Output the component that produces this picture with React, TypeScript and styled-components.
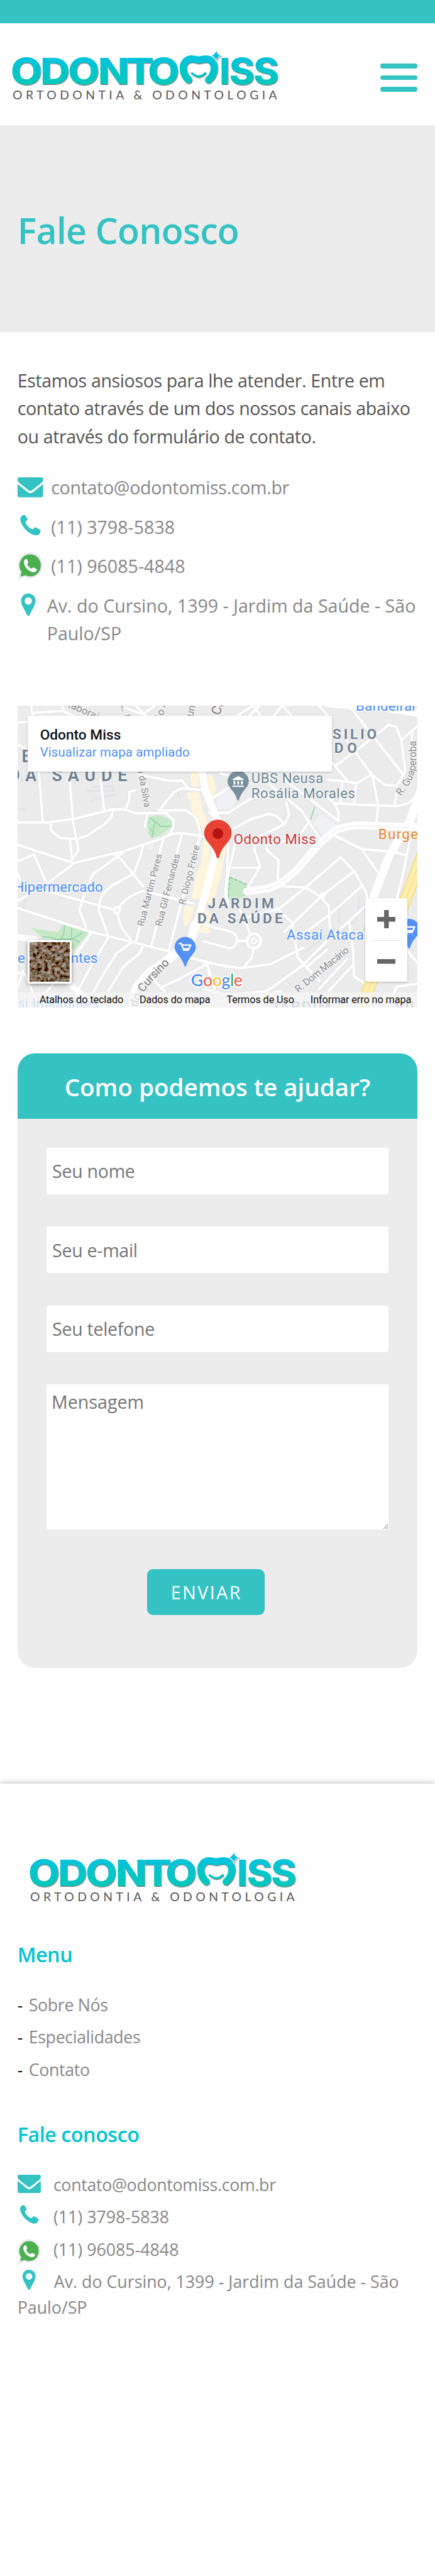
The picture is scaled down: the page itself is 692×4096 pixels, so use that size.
import React from 'react';
import styled, { createGlobalStyle, css } from 'styled-components';

/* Design units are those of a 750-wide artboard shown in a 692px window. */
const u = (n: number) => `${+((n * 692) / 750).toFixed(3)}px`;

const teal = '#35c2c3';
const cyan = '#00c5cd';
const mist = '#ececec';
const grey = '#888';

const GlobalStyle = createGlobalStyle`
  *, *::before, *::after { box-sizing: border-box; }
  html, body { margin: 0; padding: 0; background: #fefefe; }
  body { font-family: 'Open Sans', 'Noto Sans', sans-serif; color: #222; }
  h1, h2, h3, p, ul { margin: 0; padding: 0; font-weight: inherit; }
`;

const Page = styled.div`
  display: flex;
  flex-direction: column;
  width: ${u(750)};
  height: 4096px;
  overflow: hidden;
`;

const TopBar = styled.div`
  flex: none;
  height: ${u(40)};
  background: ${teal};
`;

const Header = styled.header`
  display: flex;
  flex: none;
  justify-content: space-between;
  align-items: flex-start;
  height: ${u(176)};
  padding: ${u(40)} ${u(30)} 0 ${u(15)};
  background: #fff;
`;

const LogoSvg = styled.svg`
  display: block;
  width: ${u(470)};
  height: ${u(100)};
`;

const MenuButton = styled.button`
  display: flex;
  flex-direction: column;
  gap: ${u(12)};
  width: ${u(64)};
  margin-top: ${u(30)};
  padding: 0;
  border: 0;
  background: none;
`;

const MenuBar = styled.span`
  height: ${u(8)};
  border-radius: ${u(4)};
  background: ${teal};
`;

const Hero = styled.section`
  display: flex;
  flex: none;
  align-items: center;
  height: ${u(356)};
  padding: ${u(5)} ${u(30)} 0;
  background: ${mist};
`;

const HeroTitle = styled.h1`
  font-size: ${u(62)};
  font-weight: 600;
  letter-spacing: ${u(-0.77)};
  color: ${teal};
`;

const Main = styled.main`
  flex: none;
  padding: ${u(60)} ${u(30)} ${u(200)};
`;

const Intro = styled.p`
  font-size: ${u(31)};
  line-height: ${u(48)};
  letter-spacing: ${u(-0.42)};
  white-space: nowrap;
  color: #555;
`;

const ContactList = styled.ul<{ $gap: number; $top: number }>`
  display: flex;
  flex-direction: column;
  gap: ${p => u(p.$gap)};
  margin-top: ${p => u(p.$top)};
  list-style: none;
`;

const ContactRow = styled.li<{ $small?: boolean; $inset: number; $tight?: boolean }>`
  display: grid;
  grid-template-columns: ${p => u(p.$inset)} 1fr;
  color: ${grey};
  white-space: nowrap;
  font-size: ${p => u(p.$small ? 29 : 31)};
  line-height: ${p => u(p.$small ? 56 : 48)};
  letter-spacing: ${p => u(p.$tight ? -0.35 : 0)};
`;

const IconSvg = styled.svg<{ $small?: boolean }>`
  display: block;
  overflow: visible;
  width: ${p => u(p.$small ? 40 : 44)};
  height: ${p => u(p.$small ? 56 : 48)};
`;

const FooterAddress = styled.p`
  margin-top: ${u(6)};
  color: ${grey};
  white-space: nowrap;
  font-size: ${u(29)};
  line-height: ${u(44)};
`;

const InlinePin = styled.svg`
  width: ${u(63)};
  height: ${u(35)};
  vertical-align: ${u(-3.5)};
`;

/* ---------- map ---------- */

const MapFrame = styled.div`
  position: relative;
  width: ${u(690)};
  height: ${u(520)};
  margin-top: ${u(100)};
  overflow: hidden;
  font-family: Roboto, 'Open Sans', sans-serif;
`;

const MapSvg = styled.svg`
  display: block;
  width: 100%;
  height: 100%;
`;

const PlaceCard = styled.div`
  position: absolute;
  left: ${u(18)};
  top: ${u(18)};
  width: ${u(524)};
  height: ${u(95.5)};
  padding: ${u(18)} ${u(21)};
  border-radius: ${u(2)};
  background: #fff;
  box-shadow: 0 1px 3px rgba(0, 0, 0, 0.22);
`;

const PlaceName = styled.div`
  font-size: ${u(24.6)};
  font-weight: 500;
  line-height: ${u(30)};
  color: #111;
`;

const PlaceLink = styled.a`
  display: block;
  font-size: ${u(22)};
  line-height: ${u(30)};
  letter-spacing: ${u(0.2)};
  color: #5590f5;
`;

const ZoomControl = styled.div`
  position: absolute;
  left: ${u(600)};
  top: ${u(332)};
  display: flex;
  flex-direction: column;
  align-items: center;
  width: ${u(72)};
  height: ${u(144)};
  border-radius: ${u(3)};
  background: #fff;
  box-shadow: 0 1px 3px rgba(0, 0, 0, 0.25);
`;

const ZoomKey = styled.div`
  display: flex;
  align-items: center;
  justify-content: center;
  width: ${u(54)};
  height: 50%;
  & + & { border-top: 1px solid #e2e2e2; }
`;

const ZoomGlyph = styled.svg`
  width: ${u(32)};
  height: ${u(32)};
  fill: #666;
`;

const Satellite = styled.div`
  position: absolute;
  left: ${u(18)};
  top: ${u(404.5)};
  width: ${u(76)};
  height: ${u(75)};
  border: ${u(3.5)} solid #fff;
  border-radius: ${u(3)};
  overflow: hidden;
  box-shadow: 0 2px 6px rgba(0, 0, 0, 0.4);
`;

const Attribution = styled.div`
  position: absolute;
  left: 0;
  right: 0;
  bottom: 0;
  display: flex;
  justify-content: space-between;
  height: ${u(26)};
  padding: 0 ${u(11)} 0 ${u(38)};
  background: rgba(245, 245, 245, 0.78);
  font-size: ${u(17.6)};
  line-height: ${u(27)};
  letter-spacing: ${u(-0.1)};
  color: #111;
  white-space: nowrap;
`;

/* ---------- form ---------- */

const Card = styled.section`
  margin-top: ${u(80)};
  border-radius: ${u(30)};
  overflow: hidden;
  background: ${mist};
`;

const CardTitle = styled.h2`
  display: flex;
  align-items: center;
  justify-content: center;
  height: ${u(112)};
  padding-top: ${u(3)};
  background: ${teal};
  color: #fff;
  font-size: ${u(41.8)};
  font-weight: 600;
  white-space: nowrap;
`;

const Form = styled.form`
  display: flex;
  flex-direction: column;
  gap: ${u(56)};
  padding: ${u(50)} ${u(50)} ${u(90)};
`;

const fieldStyle = css`
  display: block;
  width: 100%;
  border: 0;
  border-radius: ${u(4)};
  outline: 0;
  background: #fff;
  font-family: inherit;
  font-size: ${u(31)};
  letter-spacing: ${u(-0.33)};
  color: #333;
  &::placeholder { color: #757575; opacity: 1; }
`;

const Field = styled.input`
  ${fieldStyle}
  height: ${u(80)};
  padding: 0 ${u(10)};
`;

const MessageField = styled.textarea`
  ${fieldStyle}
  height: ${u(250)};
  padding: ${u(8.4)} ${u(9)};
  line-height: ${u(44)};
  letter-spacing: 0;
  resize: both;
`;

const SubmitButton = styled.button`
  width: ${u(202)};
  height: ${u(80)};
  margin: ${u(12)} 0 0 ${u(174)};
  padding: 0 0 0 ${u(2)};
  border: 0;
  border-radius: ${u(10)};
  background: ${teal};
  color: #fff;
  font-family: inherit;
  font-size: ${u(31)};
  letter-spacing: ${u(2.7)};
`;

/* ---------- footer ---------- */

const Footer = styled.footer`
  flex: none;
  height: ${u(1400)};
  padding: ${u(112)} ${u(30)} 0;
  box-shadow: 0 0 ${u(10)} rgba(0, 0, 0, 0.3);
`;

const FooterLogo = styled.div`
  margin-left: ${u(15)};
`;

const FooterTitle = styled.h3<{ $top: number }>`
  margin-top: ${p => u(p.$top)};
  font-size: ${u(35)};
  font-weight: 600;
  line-height: ${u(48)};
  letter-spacing: ${u(-0.5)};
  color: ${cyan};
`;

const FooterMenu = styled.ul`
  margin-top: ${u(35)};
  list-style: none;
`;

const FooterLink = styled.li`
  display: flex;
  font-size: ${u(29)};
  line-height: ${u(56)};
  letter-spacing: ${u(-0.35)};
  color: ${grey};
  &::before {
    content: '-';
    width: ${u(19.5)};
    color: #111;
  }
`;

/* ---------- drawings ---------- */

function Logo({ id }: { id: string }) {
  return (
    <LogoSvg viewBox="15 80 470 100" role="img" aria-label="Odonto Miss">
      <defs>
        <linearGradient id={id} gradientUnits="userSpaceOnUse" x1="0" y1="98" x2="0" y2="146">
          <stop offset="0" stopColor="#02c3dc" />
          <stop offset="1" stopColor="#04c8b9" />
        </linearGradient>
        <filter id={`${id}-shade`} x="-5%" y="-10%" width="110%" height="125%">
          <feDropShadow dx="0.8" dy="1.2" stdDeviation="0.6" floodColor="#5b3d40" floodOpacity="0.75" />
        </filter>
      </defs>
      <g fill={`url(#${id})`} filter={`url(#${id}-shade)`} fontFamily="Inter, sans-serif" fontWeight="800" fontSize="63">
        <text transform="scale(1.12 1)" x="16.2 62.1 104.600 150.700 194.200 227.400" y="145.3">ODONTO</text>
        <text x="378.3" y="145.3">I</text>
        <text transform="scale(1.06 1)" x="372.800 412.200" y="145.3">SS</text>
        <g fill="none" stroke={`url(#${id})`} strokeLinecap="round">
          <path strokeWidth="12.500" d="M325 137.500C314 128 314 113 319 107C325 98.500 334 101.500 342.300 103.500C350.500 101.500 360 98.500 366 107C371 113 371 128 359.500 137.500" />
          <path strokeWidth="3.600" d="M331 126Q342 137 353.500 126" />
        </g>
        <path stroke="#fff" strokeWidth="1.200" d="M372.600 86Q374.500 93.500 381.500 95.500Q374.500 98 372.600 105.500Q370.500 98 363.500 95.500Q370.500 93.500 372.600 86Z" />
      </g>
      <text x="21.500" y="171.500" textLength="456" lengthAdjust="spacing" fontFamily="Lato, sans-serif" fontWeight="400" fontSize="21" fill="#5c5657">
        ORTODONTIA &amp; ODONTOLOGIA
      </text>
    </LogoSvg>
  );
}

type IconProps = { small?: boolean };

const box = (small?: boolean) => (small ? '0 0 44 61.6' : '0 0 44 48');

const MailIcon = ({ small }: IconProps) => (
  <IconSvg $small={small} viewBox={box(small)} fill={teal}>
    <g transform={small ? 'translate(0 5.500)' : undefined}>
      <path d="M3 6.500h38a3 3 0 0 1 3 3v1.500c0 2-1.500 4-3.500 5.600L25.500 28.500c-2.500 2-4.500 2-7 0L3.500 16.600C1.500 15 0 13 0 11V9.500a3 3 0 0 1 3-3z" />
      <path d="M0 18.200c5 4 10.500 8.500 16.500 13.300 4 3 7 3 11 0C33.500 26.700 39 22.200 44 18.200V38a3 3 0 0 1-3 3H3a3 3 0 0 1-3-3z" />
    </g>
  </IconSvg>
);

const PhoneIcon = ({ small }: IconProps) => (
  <IconSvg $small={small} viewBox={box(small)} fill={teal}>
    <path
      transform={small ? 'translate(0 5.600)' : undefined}
      d="M7.500 4.500C9.500 3 12 2.600 13.200 3.600L17 9.800C17.600 11 16.600 12.300 15.200 13.200C13.400 14.500 13.600 16 14.500 17.800C16.600 21.800 20 25.300 24 27.300C26 28.200 27.300 27.500 28.300 25.900C29.200 24.500 30.400 24 31.700 24.600L38.600 28.500C40.200 29.800 39.600 32.500 38.200 35C36.600 37.700 32.500 38.700 29 37.800C18 35 5.500 21.500 4.600 10.500C4.500 8 5.500 6 7.500 4.500Z"
    />
  </IconSvg>
);

const WhatsIcon = ({ small }: IconProps) => (
  <IconSvg $small={small} viewBox={box(small)}>
    <g transform={small ? 'translate(0 11)' : undefined}>
      <path fill="#e9edf0" d="M22 0a22 22.500 0 1 1-9.800 43L0 48 3.400 34.500A22 22.500 0 0 1 22 0Z" />
      <path fill="#4caf50" d="M22 3.800a18.400 19 0 1 1-8.500 36L5 42l1.800-8A18.400 19 0 0 1 22 3.800Z" />
      <path
        fill="#fff"
        d="M13 12.500C14.200 11.500 15.600 11.600 16.300 12.500L18.300 17C18.600 18.200 17.200 19.400 16.600 20.200C16.800 23 20.500 27 24.200 28.500C25.500 27.800 26.200 26.300 27.300 26.200L32.500 28.700C33.500 29.500 32.900 31.500 31.800 32.900C30.300 34.500 27.500 34.800 25 34.200C18 32.200 12 25.500 10.900 18.500C10.700 16 11.500 13.800 13 12.500Z"
      />
    </g>
  </IconSvg>
);

const pinPath = 'M12.500 0C19.500 0 25 5.500 25 12.500C25 20 18.500 28 14.600 37.200Q12.500 40 10.400 37.200C6.500 28 0 20 0 12.500C0 5.500 5.500 0 12.500 0ZM12.500 6.500a6.300 6.300 0 1 0 0 12.600a6.300 6.300 0 1 0 0-12.600Z';

const PinIcon = () => (
  <IconSvg viewBox="0 0 44 48">
    <path fill={teal} fillRule="evenodd" transform="translate(6 3)" d={pinPath} />
  </IconSvg>
);

type MarkerProps = { x: number; y: number; fill: string; children?: React.ReactNode };
const Marker = ({ x, y, fill, children }: MarkerProps) => (
  <g transform={`translate(${x} ${y})`}>
    <path fill={fill} d="M0-18.500a18.300 18.300 0 0 1 18.300 18.300C18.300 10 6 15 1.500 31.500Q0 34 -1.500 31.500C-6 15-18.300 10-18.300-.2A18.300 18.300 0 0 1 0-18.500Z" />
    {children}
  </g>
);

const Cart = () => (
  <path fill="none" stroke="#fff" strokeWidth="2.600" strokeLinejoin="round" d="M-11-7h4l4.500 11.500h9M-6-4.500h15.500l-3 6.500h-9.500M-2 8.300v.5M6 8.300v.5" />
);

const minorWest = [
  'M90 637H240L380 620L500 592L580 573L650 575L700 593L865 592',
  'M200 390L220 637', 'M360 440L378 640L405 770L365 822', 'M520 430L538 580',
  'M262 640V675L310 712L400 716L450 700L540 645L575 612L585 575', 'M360 716L370 800',
  'M90 745L380 832L640 775L850 710L880 692L940 688L1060 705',
  'M90 825L175 790L235 920', 'M90 1015L245 930L380 835', 'M90 880L110 930',
  'M645 575L668 530V490L700 480', 'M715 405L870 435H940L970 470', 'M820 580L900 490L940 472L1040 480',
  'M865 600L897 625V655L875 700', 'M830 578H960L1010 610L1035 680V705', 'M762 590L748 660',
  'M740 745L725 800L690 885L580 940C530 975 510 1010 510 1060L560 1185',
  'M640 780L480 885L435 985L410 1060L445 1145', 'M590 790L625 815L740 945',
  'M90 1050L470 1165L690 1215L870 1258', 'M225 965L600 1060', 'M610 1060C630 1010 680 985 740 968L1000 1028',
  'M605 1075L625 1140L680 1210', 'M845 710L800 870L700 1215', 'M940 695L850 990L780 1240',
  'M1035 700L930 1050L870 1260', 'M560 1190L470 1330L400 1450', 'M470 1170L380 1290L210 1490',
  'M740 1230L720 1270L640 1330L560 1450L540 1528', 'M680 1215L600 1270L520 1390L440 1528',
  'M985 1290L1180 1335', 'M780 1385L850 1450M830 1435L940 1385L1070 1320L1110 1440',
  'M160 73L170 130M165 108L330 98M320 73L325 100L420 140', 'M90 155L150 150M90 260L150 290',
  'M650 85L740 115L800 73M700 73L760 125', 'M1075 530L1200 460', 'M120 1350L90 1430M90 1360L130 1370L200 1528',
  'M1080 590H1180', 'M1180 740L1165 1030',
];

const minorEast = [
  'M75 590H130L240 525L345 500', 'M150 670L250 620L340 595L380 605L420 645L270 715L265 770L295 850L230 950',
  'M430 540L445 600L420 645', 'M165 740L135 860L115 960L130 1040M150 855H290', 'M340 450L510 580L600 710',
  'M550 630L490 710L325 748L330 770L390 820L385 930', 'M420 430L700 630V590L680 545L600 480',
  'M680 545L900 555L1000 558L1060 545L1110 500', 'M895 650L905 550L875 410L780 290L740 240',
  'M690 360L820 270L960 165L1000 175L1025 240L1045 390L1000 460L940 455L870 405L790 450L750 440L660 340',
  'M1110 170L1025 240M1080 200V260M760 80L1035 405', 'M600 73L650 130M780 95L740 73',
  'M640 430L790 445M720 440L710 540M790 450L780 545M1000 500L990 550',
  'M680 700L820 765L1000 780M820 765L920 900', 'M710 805L780 870L840 970L860 1040',
  'M405 945L530 950L600 990L650 1040L655 1150', 'M710 805L530 950L390 1055L200 1100',
  'M775 875L615 990L480 1110L420 1165', 'M825 940L650 1085L480 1200', 'M380 1050L460 1120L490 1290L600 1400',
  'M180 1208H230M0 1130L150 1165C190 1190 180 1230 140 1245L0 1210', 'M190 1060L245 1175M265 1240L250 1290L210 1335',
  'M0 1310L190 1340L350 1320L520 1240', 'M20 1320L40 1400', 'M0 1440L130 1470L330 1450L510 1330L650 1200L840 1040',
  'M755 1120L775 1250L780 1380L830 1410', 'M770 1330L640 1460M745 1295L600 1440M540 1330L640 1250',
  'M1070 720L1030 900L1000 1010M990 780L1050 795', 'M1060 1260L1130 1340M1000 1430L1110 1415M960 1528L1000 1430',
  'M160 130L260 73L300 125M360 125L410 73L460 125M240 120L290 73', 'M90 400L130 410M30 530L120 480',
  'M330 1460L420 1528M210 1500L400 1450',
];

const lanes = ['M700 1120L705 1050L690 1020', 'M800 980L810 1020L790 1110L700 1180', 'M510 1275L680 1150', 'M550 1300L640 1240', 'M410 1370L450 1420'];
const lanesWest = ['M450 485H590', 'M470 530L600 500', 'M470 465L580 462L590 490', 'M90 575H130', 'M90 440L120 430', 'M910 480L930 515', 'M130 1000L120 1050'];

function MapDrawing() {
  return (
    <MapSvg viewBox="0 0 690 520" preserveAspectRatio="none">
      <defs>
        <path id="guaperoba" d="M661 156C672 142 684 125 687 103V64" />
        <path id="cursino" d="M206 520C212 492 236 472 262 444" />
      </defs>
      <rect width="690" height="520" fill="#ebebec" />
      <g transform="scale(0.33333 0.35714) translate(-90 -73)" strokeLinejoin="round" strokeLinecap="round">
        <g fill="#fdf5dc">
          <path d="M985 395L1030 395L1028 465L985 460ZM1072 405L1100 415L1118 480L1095 515L1120 570L1090 570L1075 500ZM970 490L1030 490L1045 570L1075 640L1060 700L1040 660L990 580L985 525L965 520ZM1110 600L1145 610V690L1170 740L1150 860L1100 1030L1065 1020L1120 820ZM1050 720L1090 740L1080 850L1040 1010L990 1005L1010 900L1040 830ZM950 1040L1005 1040L990 1100L965 1140L948 1130ZM1045 1050L1085 1070L1080 1175L1020 1165Z" />
        </g>
        <g fill="#eff1f5">
          <path d="M1120 510L1190 480L1230 510L1200 570L1120 575ZM1620 640L1660 600L1740 650L1670 700Z" />
          <circle cx="775" cy="752" r="18" />
        </g>
        <g fill="#c5e9c6">
          <path d="M765 612L815 600L885 625L888 655L830 700L785 712L765 690L770 660L755 655ZM160 1145L250 1160L300 1165L325 1130L460 1168L380 1255L360 1210L220 1195ZM1187 900L1272 935L1260 1000L1180 1010Z" />
          <path d="M1875 1160L1895 1120V1160Z" />
        </g>
        <path d="M785 710L800 630L775 615M800 630L830 655H880M770 660L795 690M220 1190C260 1180 290 1210 310 1200C330 1190 330 1160 335 1135M310 1200H370L425 1170M370 1145L368 1195L410 1215M1625 565L1605 625" fill="none" stroke="#8fd3a4" strokeWidth="5" />
        <path d="M1187 900L1272 935L1262 1000M1187 900L1178 1030" fill="none" stroke="#7cc992" strokeWidth="5" strokeDasharray="16 10" />

        <g fill="none" stroke="#e0e2e6" strokeWidth="16">
          {minorWest.map(d => <path key={d} d={d} />)}
          <g transform="translate(1050 0)">{minorEast.map(d => <path key={d} d={d} />)}</g>
        </g>
        <g fill="none" stroke="#e0e2e7" strokeWidth="7">
          {lanesWest.map(d => <path key={d} d={d} />)}
          <g transform="translate(1050 0)">{lanes.map(d => <path key={d} d={d} />)}</g>
        </g>
        <g fill="none" stroke="#fff" strokeWidth="12">
          {minorWest.map(d => <path key={d} d={d} />)}
          <g transform="translate(1050 0)">{minorEast.map(d => <path key={d} d={d} />)}</g>
        </g>
        <circle cx="604" cy="1060" r="21" fill="#fff" />
        <circle cx="604" cy="1060" r="8" fill="#eee" />
        <circle cx="1312" cy="1208" r="35" fill="#ebebec" stroke="#fff" strokeWidth="13" />
        <circle cx="1312" cy="1208" r="13" fill="#ebebec" stroke="#fff" strokeWidth="7" />
        <circle cx="1668" cy="990" r="15" fill="#fff" />

        <g fill="none" stroke="#fff">
          <path strokeWidth="37" d="M1045 380L1060 480L1120 620L1130 700L1105 820L1055 1000L1010 1150" />
          <path strokeWidth="46" d="M1010 1130L985 1210L870 1295" />
          <path strokeWidth="34" d="M900 1275L770 1355L700 1430L655 1540" />
          <path strokeWidth="30" d="M80 1190L180 1200L260 1330L400 1450L500 1540" />
          <path strokeWidth="37" d="M1275 970L1390 955L1450 930L1530 870L1650 740L1740 670L1830 650L2170 660" />
          <path strokeWidth="42" d="M2180 470L2115 640L2010 800L1930 1000" />
          <path strokeWidth="40" d="M1690 60L1800 70L1950 75L2180 110" />
        </g>
        <path d="M1275 972L1390 955L1450 930L1530 870L1650 740L1740 670L1830 652L2120 662" fill="none" stroke="#e2e4e8" strokeWidth="3" strokeDasharray="40 8" />
        <g fill="none" strokeLinecap="butt">
          <path stroke="#f6dc84" strokeWidth="62" d="M2190 780L2060 1100M1935 1370L1870 1528" />
          <path stroke="#fdeeae" strokeWidth="50" d="M2190 780L2060 1100M1935 1370L1870 1528" />
          <path stroke="#f6dc84" strokeWidth="4" d="M2190 780L2060 1100M1935 1370L1870 1528" />
        </g>
      </g>

      <g fill="#8b8e91" fontSize="16" stroke="#f3f3f3" strokeWidth="3" strokeLinejoin="round" paintOrder="stroke">
        <text transform="translate(217 381) rotate(-75.500)" textLength="128">Rua Martim Peres</text>
        <text transform="translate(248 381) rotate(-75.500)" textLength="128">Rua Gil Fernandes</text>
        <text transform="translate(288.500 344) rotate(-76)" textLength="105">R. Diogo Freire</text>
        <text transform="translate(207 109) rotate(80)" textLength="68">a da Silva</text>
        <text transform="translate(81 0) rotate(24)" fontSize="18">Itaboraí</text>
        <text transform="translate(178 -4) rotate(82)" fontSize="19">L. M</text>
        <text transform="translate(250 22) rotate(-76)" fontSize="18">io A</text>
        <text transform="translate(302 20) rotate(-76)" fontSize="18">ung</text>
        <text transform="translate(348 18) rotate(-70)" fontSize="23" fill="#77797c">Cu</text>
        <text transform="translate(484 495) rotate(-39)" textLength="114" fontSize="17">R. Dom Macário</text>
        <text fontSize="17"><textPath href="#guaperoba">R. Guaperoba</textPath></text>
        <text fontSize="20" fill="#77797c"><textPath href="#cursino">do Cursino</textPath></text>
      </g>

      <g fill="#6f7f8e" fontWeight="600" stroke="#f1f1f1" strokeWidth="3" strokeLinejoin="round" paintOrder="stroke">
        <text x="7" y="98" fontSize="29">E</text>
        <text x="-15" y="130.500" fontSize="29" textLength="204">DA SAÚDE</text>
        <text x="543" y="57" fontSize="24.500" textLength="76">SILIO</text>
        <text x="546" y="81.500" fontSize="24.500" textLength="39">DO</text>
        <text x="328" y="349.500" fontSize="24.500" textLength="114">JARDIM</text>
        <text x="310" y="374.500" fontSize="24.500" textLength="147">DA SAÚDE</text>
        <text x="436" y="527" fontSize="24.500" textLength="104">JARDIM</text>
        <text x="650" y="527" fontSize="24.500" textLength="40">VIL</text>
      </g>

      <g fontSize="24" stroke="#f6f6f6" strokeWidth="3" strokeLinejoin="round" paintOrder="stroke">
        <g fill="#4f8ff5">
          <text x="-6" y="321" textLength="153">Hipermercado</text>
          <text x="0" y="443.500">e</text>
          <text x="92" y="443.500" textLength="46">ntes</text>
          <text x="0" y="521" textLength="140">si Imigrantes</text>
          <text x="583" y="8.500" textLength="105">Bandeirar</text>
          <text x="464" y="403.500" textLength="147">Assaí Atacad</text>
        </g>
        <g fill="#6f8794">
          <text x="403" y="133.500" textLength="124">UBS Neusa</text>
          <text x="403" y="159" textLength="179">Rosália Morales</text>
        </g>
        <text x="372.500" y="238.500" textLength="142" fill="#c9383b">Odonto Miss</text>
        <text x="622" y="229.500" fill="#e38b29" textLength="78">Burger</text>
      </g>

      <Marker x={380.300} y={131} fill="#78909c">
        <path fill="#fff" d="M-9.500-4.500L0-9.500L9.500-4.500V-2.500H-9.500ZM-8-1h3v6h-3zM-1.500-1h3v6h-3zM5-1h3v6h-3zM-10 7h20v2.200h-20z" />
      </Marker>
      <Marker x={289} y={417} fill="#5491f5"><Cart /></Marker>
      <Marker x={675} y={386} fill="#5491f5"><Cart /></Marker>
      <g transform="translate(345.300 220.500)">
        <path fill="#ea4335" stroke="#d23a2e" d="M0-23.500A23.200 23.200 0 0 1 23.200-.3C23.200 14 6 20 1.500 41Q0 44-1.500 41C-6 20-23.200 14-23.200-.3A23.200 23.200 0 0 1 0-23.500Z" />
        <circle r="9.200" fill="#b31412" />
      </g>

      <text x="299" y="483" fontSize="29" fontWeight="500" textLength="89" fontFamily="Lato, sans-serif" stroke="#fff" strokeWidth="4" paintOrder="stroke" strokeLinejoin="round">
        <tspan fill="#4a8af4">G</tspan><tspan fill="#ee5f52">o</tspan><tspan fill="#f8c12c">o</tspan><tspan fill="#4a8af4">g</tspan><tspan fill="#45b065">l</tspan><tspan fill="#ee5f52">e</tspan>
      </text>
    </MapSvg>
  );
}

function MapPanel() {
  return (
    <MapFrame>
      <MapDrawing />
      <PlaceCard>
        <PlaceName>Odonto Miss</PlaceName>
        <PlaceLink>Visualizar mapa ampliado</PlaceLink>
      </PlaceCard>
      <ZoomControl>
        <ZoomKey><ZoomGlyph viewBox="0 0 32 32"><path d="M12 0h8v12h12v8H20v12h-8V20H0v-8h12z" /></ZoomGlyph></ZoomKey>
        <ZoomKey><ZoomGlyph viewBox="0 0 32 32"><path d="M0 12h32v8H0z" /></ZoomGlyph></ZoomKey>
      </ZoomControl>
      <Attribution>
        <span>Atalhos do teclado</span><span>Dados do mapa</span><span>Termos de Uso</span><span>Informar erro no mapa</span>
      </Attribution>
      <Satellite>
        <MapSvg viewBox="0 0 68 68">
          <filter id="rooftops" x="0" y="0" width="100%" height="100%">
            <feTurbulence type="fractalNoise" baseFrequency="0.16" numOctaves="3" seed="8" />
            <feColorMatrix values="0.8 0.2 0 0 -0.270  0.8 0.1 0 0 -0.290  0.8 0.1 0 0 -0.340  0 0 0 0 1" />
          </filter>
          <rect width="68" height="68" fill="#85705f" filter="url(#rooftops)" />
          <path d="M0 50Q25 50 34 60T68 60M30 26Q46 12 58 26T48 52" fill="none" stroke="#56604a" strokeWidth="2.500" opacity=".6" />
        </MapSvg>
      </Satellite>
    </MapFrame>
  );
}

export default function App() {
  return (
    <Page>
      <GlobalStyle />
      <TopBar />
      <Header>
        <Logo id="logo-top" />
        <MenuButton aria-label="Menu"><MenuBar /><MenuBar /><MenuBar /></MenuButton>
      </Header>
      <Hero><HeroTitle>Fale Conosco</HeroTitle></Hero>
      <Main>
        <Intro>
          Estamos ansiosos para lhe atender. Entre em<br />
          contato através de um dos nossos canais abaixo<br />
          ou através do formulário de contato.
        </Intro>
        <ContactList $gap={20} $top={40}>
          <ContactRow $inset={58} $tight><MailIcon /><span>contato@odontomiss.com.br</span></ContactRow>
          <ContactRow $inset={58}><PhoneIcon /><span>(11) 3798-5838</span></ContactRow>
          <ContactRow $inset={58}><WhatsIcon /><span>(11) 96085-4848</span></ContactRow>
          <ContactRow $inset={51}><PinIcon /><span>Av. do Cursino, 1399 - Jardim da Saúde - São<br />Paulo/SP</span></ContactRow>
        </ContactList>
        <MapPanel />
        <Card>
          <CardTitle>Como podemos te ajudar?</CardTitle>
          <Form>
            <Field placeholder="Seu nome" />
            <Field placeholder="Seu e-mail" />
            <Field placeholder="Seu telefone" />
            <MessageField placeholder="Mensagem" />
            <SubmitButton type="button">ENVIAR</SubmitButton>
          </Form>
        </Card>
      </Main>
      <Footer>
        <FooterLogo><Logo id="logo-foot" /></FooterLogo>
        <FooterTitle $top={58}>Menu</FooterTitle>
        <FooterMenu>
          <FooterLink>Sobre Nós</FooterLink>
          <FooterLink>Especialidades</FooterLink>
          <FooterLink>Contato</FooterLink>
        </FooterMenu>
        <FooterTitle $top={59}>Fale conosco</FooterTitle>
        <ContactList $gap={0} $top={35}>
          <ContactRow $small $inset={62} $tight><MailIcon small /><span>contato@odontomiss.com.br</span></ContactRow>
          <ContactRow $small $inset={62}><PhoneIcon small /><span>(11) 3798-5838</span></ContactRow>
          <ContactRow $small $inset={62}><WhatsIcon small /><span>(11) 96085-4848</span></ContactRow>
        </ContactList>
        <FooterAddress>
          <InlinePin viewBox="0 0 63 35"><path fill={teal} fillRule="evenodd" transform="translate(8.500 0) scale(0.9)" d={pinPath} /></InlinePin>
          Av. do Cursino, 1399 - Jardim da Saúde - São<br />Paulo/SP
        </FooterAddress>
      </Footer>
    </Page>
  );
}
